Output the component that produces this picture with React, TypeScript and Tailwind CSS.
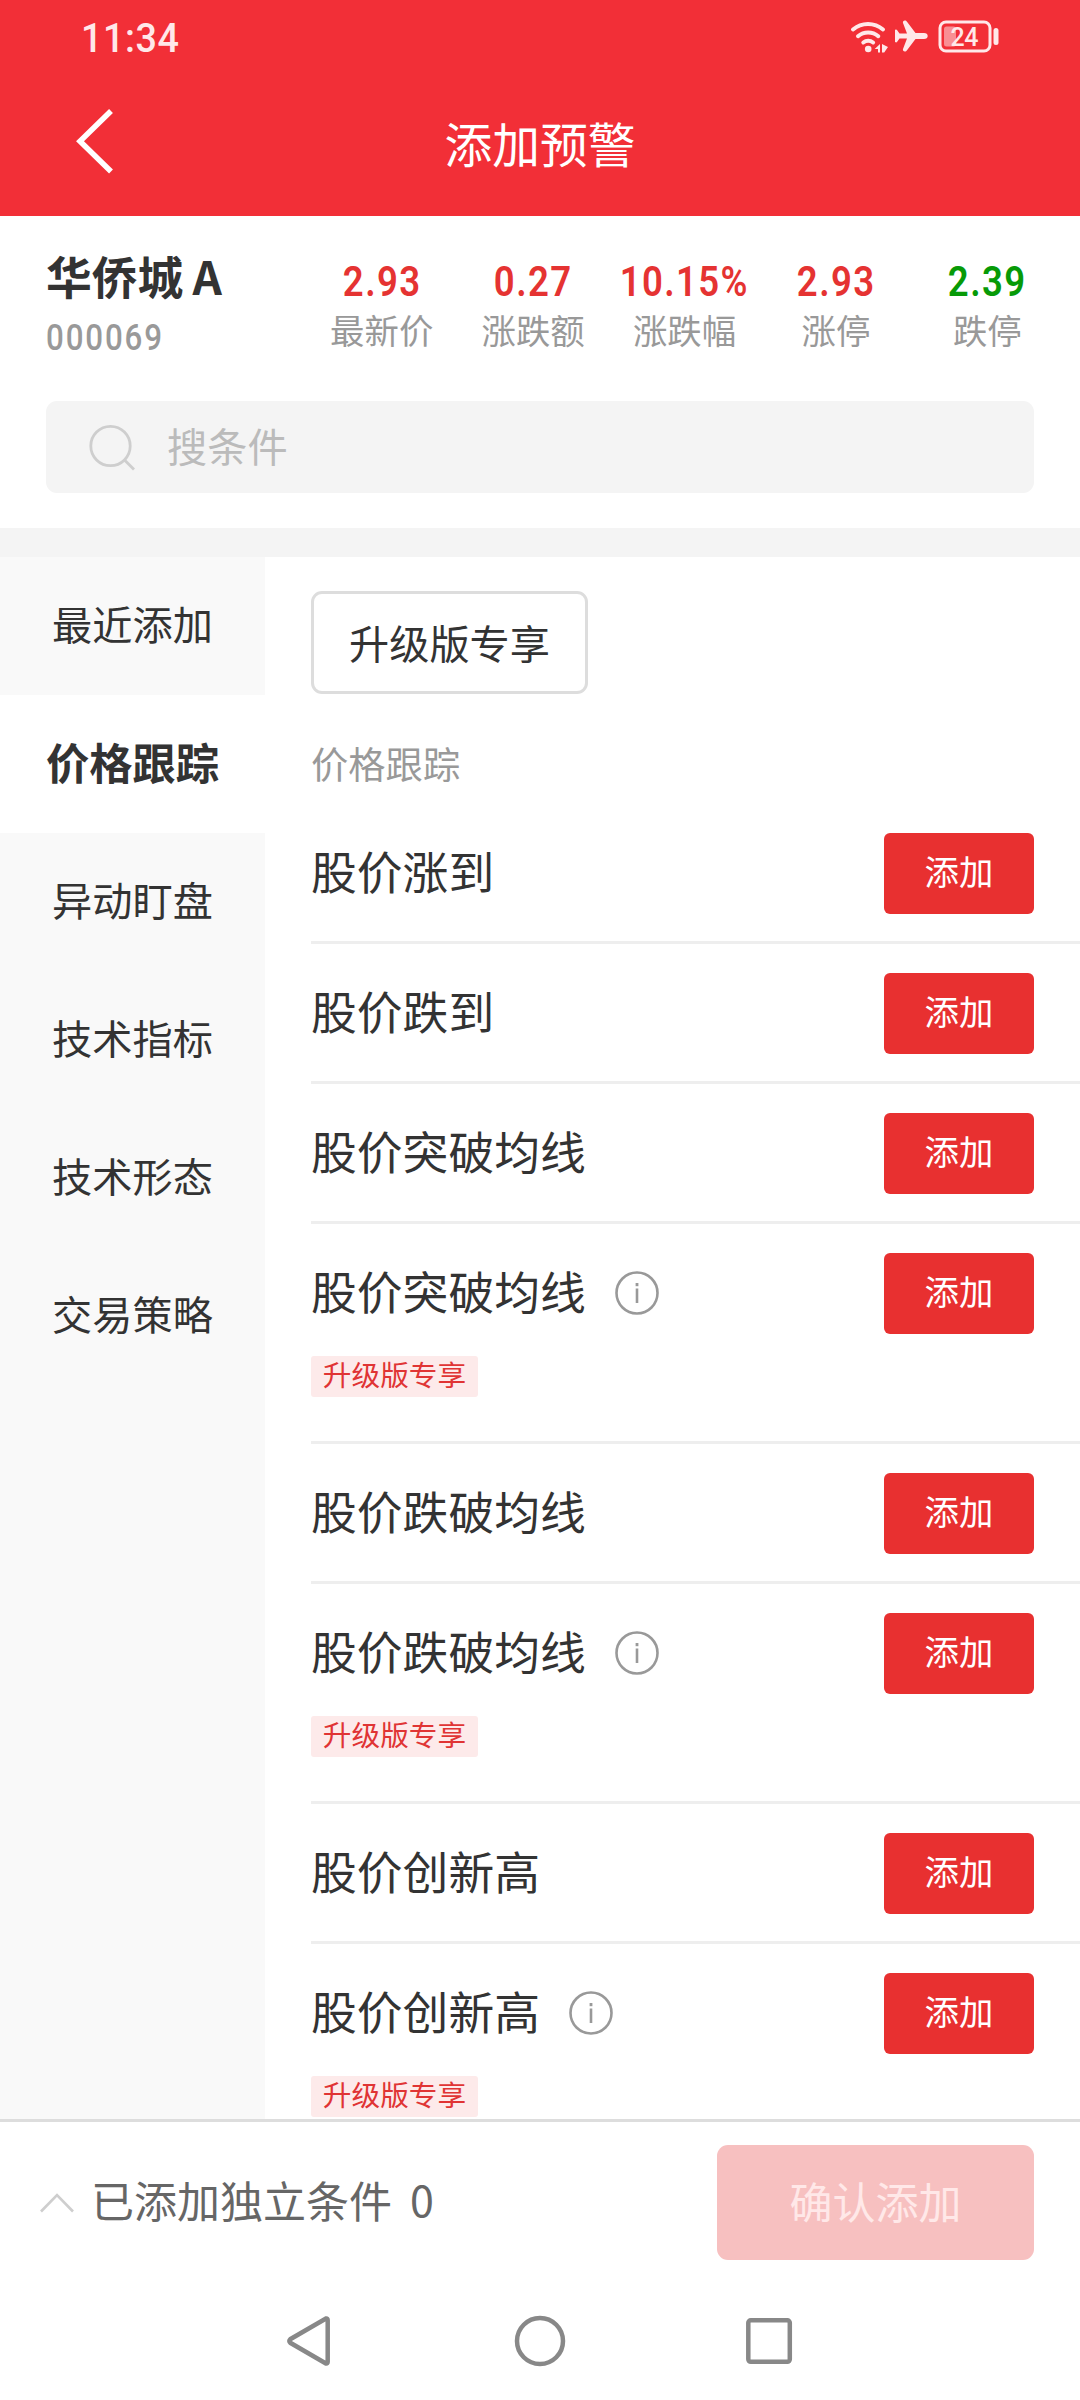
type Condition = { name: string; premium?: boolean };

const quotes = [
  { value: '2.93', label: '最新价', color: 'text-[#e53332]' },
  { value: '0.27', label: '涨跌额', color: 'text-[#e53332]' },
  { value: '10.15%', label: '涨跌幅', color: 'text-[#e53332]' },
  { value: '2.93', label: '涨停', color: 'text-[#e53332]' },
  { value: '2.39', label: '跌停', color: 'text-[#079a07]' },
];

const categories = ['最近添加', '价格跟踪', '异动盯盘', '技术指标', '技术形态', '交易策略'];
const activeCategory = '价格跟踪';

const conditions: Condition[] = [
  { name: '股价涨到' },
  { name: '股价跌到' },
  { name: '股价突破均线' },
  { name: '股价突破均线', premium: true },
  { name: '股价跌破均线' },
  { name: '股价跌破均线', premium: true },
  { name: '股价创新高' },
  { name: '股价创新高', premium: true },
];

function StatusIcons() {
  return (
    <svg width="152" height="36" viewBox="0 0 152 36" fill="none" className="text-[#ffe8e9]">
      {/* wifi */}
      <g stroke="currentColor" strokeWidth="4" strokeLinecap="round">
        <path d="M3 11.500a23 23 0 0 1 30 0" />
        <path d="M8 18.200a15.500 15.500 0 0 1 20.300 0" />
        <path d="M13.300 24.500a8 8 0 0 1 9.800 0" />
      </g>
      <circle cx="18.200" cy="31" r="3.300" fill="currentColor" />
      <path d="M30 26v8.500h-2v-3.500h-3.300zM32 26l6 3-3.800 5.500H32z" fill="currentColor" />
      {/* airplane */}
      <path
        d="M45 12.500c0-1 1.500-1.300 2.200-.3l2.300 3.300h7.500l-4-10.500c-.8-2.500 2.600-3.500 4-1.300L65.500 15H74c2.300 0 3.700 1.200 3.700 3S76.300 21 74 21h-8.500L57 32.300c-1.400 2.200-4.800 1.200-4-1.300l4-10.500h-7.500l-2.300 3.300c-.7 1-2.200.7-2.200-.3z"
        fill="currentColor"
      />
      {/* battery */}
      <rect x="90" y="4" width="50" height="29" rx="6" stroke="currentColor" strokeWidth="3" />
      <rect x="94" y="8.500" width="12" height="20" rx="2.500" fill="#f98f94" />
      <rect x="143.500" y="10" width="5" height="17" rx="2.500" fill="currentColor" />
      <text
        x="114.200"
        y="27.500"
        textAnchor="middle"
        fontSize="25"
        fontWeight="500"
        letterSpacing="-0.5"
        fill="currentColor"
        fontFamily="Roboto, sans-serif"
      >
        24
      </text>
    </svg>
  );
}

function InfoIcon() {
  return (
    <svg width="44" height="44" viewBox="0 0 44 44" fill="none" stroke="#999" className="-mt-[2px] ml-[29px]">
      <circle cx="22" cy="22" r="20.500" strokeWidth="2.600" />
      <path d="M22 17.500v14.500" strokeWidth="2.600" />
      <path d="M22 12v3.200" strokeWidth="2.800" />
    </svg>
  );
}

function ConditionRow({ item, last }: { item: Condition; last: boolean }) {
  return (
    <div
      className={
        (item.premium ? 'h-[220px]' : 'h-[140px]') +
        ' shrink-0 ' +
        (last ? '' : 'border-b-3 border-[#eeeeee]')
      }
    >
      <div className="mt-[29px] mr-[46px] flex h-[81px] items-center">
        <span className="-mt-2 text-[45.800px] leading-[60px] text-[#333333]">{item.name}</span>
        {item.premium && <InfoIcon />}
        <button className="ml-auto h-[81px] w-[150px] rounded-md bg-[#e83030] pb-1.5 text-[34.400px] leading-[75px] text-white">
          添加
        </button>
      </div>
      {item.premium && (
        <div className="mt-[22px] h-[41px] w-[167px] rounded-[3px] bg-[#fdeaea] text-center text-[28.700px] leading-[36px] text-[#e03434]">
          升级版专享
        </div>
      )}
    </div>
  );
}

export default function App() {
  return (
    <div className="flex h-[2400px] w-[1080px] flex-col overflow-hidden bg-white font-['Noto_Sans_CJK_SC',sans-serif]">
      <header className="h-[216px] shrink-0 bg-[#f22f37] text-white">
        <div className="flex h-[72px] items-center justify-between pr-[78px] pl-[81px]">
          <span className="mt-1 origin-left scale-x-[.92] font-['Roboto',sans-serif] text-[41px] leading-[48px] font-medium tracking-[0.6px] text-[#ffe8e9]">
            11:34
          </span>
          <StatusIcons />
        </div>
        <div className="grid h-[144px] grid-cols-[200px_1fr_200px] items-start">
          <svg width="44" height="72" viewBox="0 0 44 72" fill="none" className="mt-[33px] ml-[72px]">
            <path d="M39 6 8 36.200 39 66.500" stroke="#fff" strokeWidth="5.500" />
          </svg>
          <h1 className="mt-[36px] text-center text-[47.800px] leading-[70px]">添加预警</h1>
        </div>
      </header>

      <section className="flex h-[185px] shrink-0">
        <div className="w-[260px] pt-[33px] pl-[46px]">
          <div className="flex text-[45.800px] leading-[52px] font-bold text-[#333333]">
            华侨城<span className="ml-[9px]">A</span>
          </div>
          <div className="mt-[16px] origin-left scale-x-[.87] font-['Roboto',sans-serif] text-[36px] leading-[42px] font-medium tracking-[2.1px] text-[#999999]">
            000069
          </div>
        </div>
        <div className="ml-[46px] grid w-[757px] grid-cols-5 pt-[41px]">
          {quotes.map((q) => (
            <div key={q.label} className="flex flex-col items-center">
              <span
                className={
                  "scale-x-[.87] font-['Roboto',sans-serif] text-[42px] leading-[50px] font-semibold tracking-[1.6px] " +
                  q.color
                }
              >
                {q.value}
              </span>
              <span className="-mt-[3px] text-[34.400px] leading-[50px] text-[#999999]">{q.label}</span>
            </div>
          ))}
        </div>
      </section>

      <div className="mx-[46px] flex h-[92px] shrink-0 items-center rounded-[11px] bg-[#f4f4f4] pl-[43px]">
        <svg width="48" height="48" viewBox="0 0 48 48" fill="none" stroke="#cecece" strokeWidth="2.800">
          <circle cx="21.500" cy="23" r="19.700" />
          <path d="m35.500 37 9.500 9.500" />
        </svg>
        <span className="-mt-1 ml-[30px] text-[40.200px] leading-[60px] text-[#bbbbbb]">搜条件</span>
      </div>
      <div className="mt-[35px] h-[29px] shrink-0 bg-[#f4f4f4]" />

      <main className="flex h-[1562px] shrink-0 overflow-hidden">
        <nav className="w-[265px] shrink-0 bg-[#f9f9f9]">
          {categories.map((c) => (
            <div
              key={c}
              className={
                'flex h-[138px] items-center justify-center pb-1.5 text-[#333333] ' +
                (c === activeCategory ? 'bg-white text-[43.300px] font-bold' : 'text-[40.200px]')
              }
            >
              {c}
            </div>
          ))}
        </nav>
        <div className="flex flex-1 flex-col pl-[46px]">
          <div className="mt-[34px] flex h-[103px] w-[277px] shrink-0 items-center justify-center rounded-[11px] border-3 border-[#dddddd] text-[40.200px] text-[#333333]">
            升级版专享
          </div>
          <div className="flex h-[110px] shrink-0 items-end pb-[17px] text-[37.300px] leading-[48px] text-[#999999]">
            价格跟踪
          </div>
          {conditions.map((item, i) => (
            <ConditionRow key={i} item={item} last={i === conditions.length - 1} />
          ))}
        </div>
      </main>

      <footer className="flex h-[167px] shrink-0 items-start border-t-3 border-[#dddddd] pr-[46px] pl-[38px]">
        <svg width="38" height="24" viewBox="0 0 38 24" fill="none" className="mt-[69px]">
          <path d="M3 20.500 19 4l16 16.500" stroke="#cecece" strokeWidth="2.600" />
        </svg>
        <span className="mt-[45px] ml-[15px] text-[43px] leading-[64px] text-[#666666]">已添加独立条件</span>
        <span className="mt-[44px] ml-[18px] text-[43px] leading-[64px] text-[#666666]">0</span>
        <button className="mt-[23px] ml-auto h-[115px] w-[317px] rounded-[11px] bg-[#f7c0c0] pb-1 text-[43px] leading-[111px] text-[#ffe8e8]">
          确认添加
        </button>
      </footer>

      <div className="flex h-[114px] shrink-0 items-start pt-[28px] pl-[282px]">
        <svg width="54" height="54" viewBox="0 0 54 54" fill="none" stroke="#888" strokeWidth="4.500">
          <path d="M44 4.500 8.300 25.200q-2 1.800 0 3.600L44 49.500q1.700.3 1.700-1.700V6.200q0-2-1.700-1.700z" />
        </svg>
        <svg width="54" height="54" viewBox="0 0 54 54" fill="none" stroke="#888" strokeWidth="4.500" className="ml-[177px]">
          <circle cx="27" cy="27" r="23" />
        </svg>
        <svg width="54" height="54" viewBox="0 0 54 54" fill="none" stroke="#888" strokeWidth="4.500" className="ml-[175px]">
          <rect x="6.300" y="6.300" width="41.500" height="41.500" rx="2.500" />
        </svg>
      </div>
    </div>
  );
}
